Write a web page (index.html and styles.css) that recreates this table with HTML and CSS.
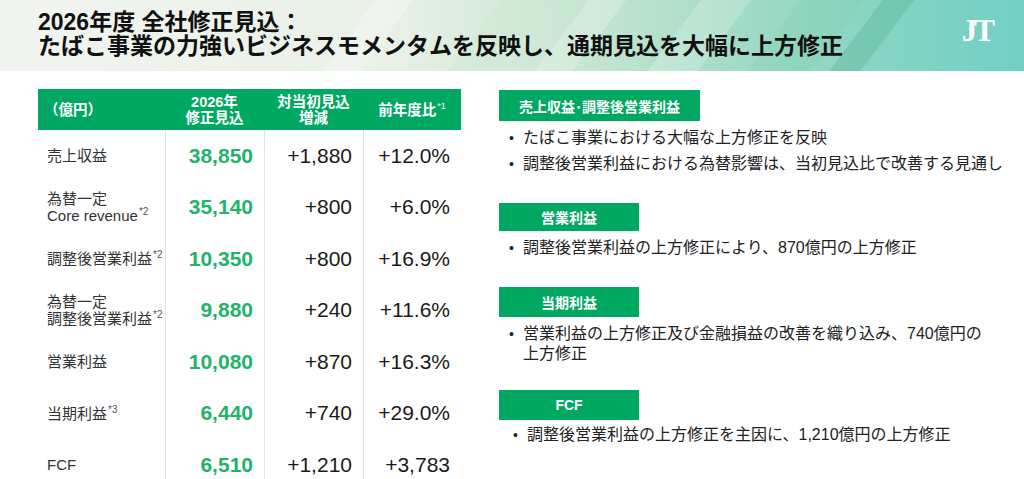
FILE: index.html
```html
<!DOCTYPE html>
<html lang="ja">
<head>
<meta charset="utf-8">
<title>2026年度 全社修正見込</title>
<link rel="stylesheet" href="styles.css">
</head>
<body>
<header class="banner">
  <h1 class="title">
    <span class="title-line">2026年度 全社修正見込：</span>
    <span class="title-line">たばこ事業の力強いビジネスモメンタムを反映し、通期見込を大幅に上方修正</span>
  </h1>
  <div class="logo">JT</div>
</header>
<main class="content">
  <div class="table">
    <div class="th th-label">（億円）</div>
    <div class="th">2026年<br>修正見込</div>
    <div class="th">対当初見込<br>増減</div>
    <div class="th"><span>前年度比<sup>*1</sup></span></div>

    <div class="td label"><span>売上収益</span></div>
    <div class="td num green">38,850</div>
    <div class="td num">+1,880</div>
    <div class="td num">+12.0%</div>

    <div class="td label"><span>為替一定<br>Core revenue<sup>*2</sup></span></div>
    <div class="td num green">35,140</div>
    <div class="td num">+800</div>
    <div class="td num">+6.0%</div>

    <div class="td label"><span>調整後営業利益<sup>*2</sup></span></div>
    <div class="td num green">10,350</div>
    <div class="td num">+800</div>
    <div class="td num">+16.9%</div>

    <div class="td label"><span>為替一定<br>調整後営業利益<sup>*2</sup></span></div>
    <div class="td num green">9,880</div>
    <div class="td num">+240</div>
    <div class="td num">+11.6%</div>

    <div class="td label"><span>営業利益</span></div>
    <div class="td num green">10,080</div>
    <div class="td num">+870</div>
    <div class="td num">+16.3%</div>

    <div class="td label"><span>当期利益<sup>*3</sup></span></div>
    <div class="td num green">6,440</div>
    <div class="td num">+740</div>
    <div class="td num">+29.0%</div>

    <div class="td label"><span>FCF</span></div>
    <div class="td num green">6,510</div>
    <div class="td num">+1,210</div>
    <div class="td num">+3,783</div>
  </div>

  <div class="notes">
    <section class="note">
      <div class="tag tag-wide">売上収益･調整後営業利益</div>
      <ul class="bullets">
        <li>たばこ事業における大幅な上方修正を反映</li>
        <li>調整後営業利益における為替影響は、当初見込比で改善する見通し</li>
      </ul>
    </section>
    <section class="note">
      <div class="tag tag-short">営業利益</div>
      <ul class="bullets">
        <li>調整後営業利益の上方修正により、870億円の上方修正</li>
      </ul>
    </section>
    <section class="note">
      <div class="tag">当期利益</div>
      <ul class="bullets">
        <li>営業利益の上方修正及び金融損益の改善を織り込み、740億円の<br>上方修正</li>
      </ul>
    </section>
    <section class="note note-last">
      <div class="tag">FCF</div>
      <ul class="bullets bullets-indent">
        <li>調整後営業利益の上方修正を主因に、1,210億円の上方修正</li>
      </ul>
    </section>
  </div>
</main>
</body>
</html>
```

FILE: styles.css
```css
html, body {
  margin: 0;
  padding: 0;
}
body {
  width: 1024px;
  height: 479px;
  overflow: hidden;
  background: #ffffff;
  font-family: "Liberation Sans", "Noto Sans CJK JP", sans-serif;
  color: #222222;
}

.banner {
  height: 71px;
  display: flex;
  justify-content: space-between;
  align-items: flex-start;
  padding: 0 32px 0 38px;
  box-sizing: border-box;
  background:
    linear-gradient(127deg,
      transparent 0 300px,
      rgba(255,255,255,0.25) 300px 330px,
      transparent 330px 400px,
      rgba(200,230,200,0.25) 400px 440px,
      transparent 440px 470px,
      rgba(255,255,255,0.22) 470px 500px,
      transparent 500px 560px,
      rgba(255,255,255,0.20) 560px 600px,
      transparent 600px 640px,
      rgba(120,200,160,0.18) 640px 690px,
      transparent 690px 705px,
      rgba(40,150,110,0.20) 705px 730px,
      transparent 730px),
    linear-gradient(90deg, #f2f4f0 0%, #e9f1e7 38%, #c4e5d0 58%, #a2dbc6 72%, #86d4c3 86%, #72cfc5 100%);
}

.title {
  margin: 10px 0 0 0;
  font-size: 23px;
  line-height: 24px;
  font-weight: 700;
  color: #111111;
  white-space: nowrap;
}
.title-line {
  display: block;
}

.logo {
  margin-top: 13px;
  font-family: "Liberation Serif", serif;
  font-weight: 700;
  font-size: 31px;
  letter-spacing: -3px;
  color: #ffffff;
  line-height: 36px;
}

.content {
  display: flex;
  align-items: flex-start;
  padding-left: 38px;
}

/* table */
.table {
  margin-top: 18px;
  display: grid;
  grid-template-columns: 127px 99px 99px 98px;
  grid-template-rows: 41px;
  grid-auto-rows: 51.5px;
}
.th {
  background: #00a862;
  color: #ffffff;
  font-weight: 700;
  font-size: 14.5px;
  line-height: 16px;
  display: flex;
  align-items: center;
  justify-content: center;
  text-align: center;
}
.th-label {
  justify-content: flex-start;
  padding-left: 6px;
}
.th sup {
  font-size: 9px;
  font-weight: 400;
  vertical-align: 6px;
  margin-left: 1px;
  line-height: 0;
}
.td {
  display: flex;
  align-items: center;
}
.label {
  padding-left: 9px;
  font-size: 15px;
  line-height: 17px;
  color: #333333;
}
.label sup {
  font-size: 10px;
  vertical-align: 6px;
  line-height: 0;
  color: #555555;
  margin-left: 1px;
}
.num {
  justify-content: flex-end;
  padding-right: 11px;
  font-size: 21px;
  color: #1a1a1a;
  border-left: 1px solid #e2e2e2;
}
.green {
  color: #1fb36b;
  font-weight: 700;
}

/* notes */
.notes {
  margin-left: 38px;
  margin-top: 19px;
  display: flex;
  flex-direction: column;
}
.note + .note {
  margin-top: 29px;
}
.note.note-last {
  margin-top: 26px;
}
.tag {
  width: 140px;
  height: 30px;
  background: #00a862;
  color: #ffffff;
  font-weight: 700;
  font-size: 14px;
  display: flex;
  align-items: center;
  justify-content: center;
}
.tag-wide {
  width: 201px;
  height: 31px;
}
.tag-short {
  height: 28px;
}
.bullets {
  list-style: none;
  margin: 7px 0 0 0;
  padding: 0 0 0 24px;
}
.note-last .bullets {
  margin-top: 5px;
}
.bullets-indent {
  padding-left: 28px;
}
.bullets li {
  position: relative;
  font-size: 16px;
  line-height: 20px;
  color: #222222;
  white-space: nowrap;
}
.bullets li + li {
  margin-top: 6px;
}
.bullets li::before {
  content: "•";
  position: absolute;
  left: -14px;
  top: 0;
  font-size: 14px;
}
```
